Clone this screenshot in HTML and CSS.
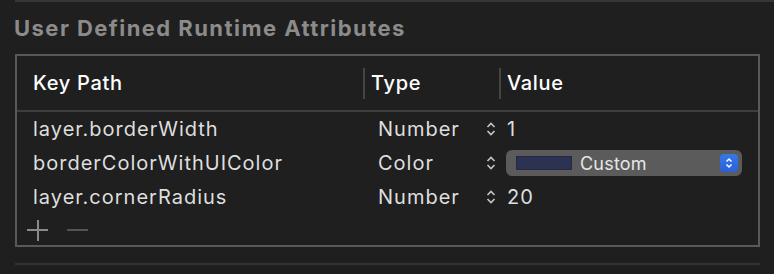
FILE: index.html
```html
<!DOCTYPE html>
<html lang="en">
  <head>
    <meta charset="UTF-8" />
    <title>User Defined Runtime Attributes</title>
    <link rel="stylesheet" href="styles.css">
  </head>
  <body>
    <div class="top-rule"></div>

    <h2 class="section-title">User Defined Runtime Attributes</h2>

    <div class="attr-box">
      <div class="attr-head">
        <div class="col-key">Key Path</div>
        <div class="col-type">Type</div>
        <div class="col-value">Value</div>
      </div>

      <div class="attr-row">
        <div class="cell-key">layer.borderWidth</div>
        <div class="cell-type">
          <span>Number</span>
          <svg class="stepper" width="10" height="14" viewBox="0 0 10 14"><path d="M1.5 5 L5 1.5 L8.5 5 M1.5 9 L5 12.5 L8.5 9" /></svg>
        </div>
        <div class="cell-value">1</div>
      </div>

      <div class="attr-row">
        <div class="cell-key">borderColorWithUIColor</div>
        <div class="cell-type">
          <span>Color</span>
          <svg class="stepper" width="10" height="14" viewBox="0 0 10 14"><path d="M1.5 5 L5 1.5 L8.5 5 M1.5 9 L5 12.5 L8.5 9" /></svg>
        </div>
        <div class="cell-value">
          <div class="popup">
            <span class="swatch"></span>
            <span class="popup-label">Custom</span>
            <span class="popup-btn">
              <svg width="10" height="14" viewBox="0 0 10 14"><path d="M2.5 5.5 L5 3 L7.5 5.5 M2.5 8.5 L5 11 L7.5 8.5" /></svg>
            </span>
          </div>
        </div>
      </div>

      <div class="attr-row">
        <div class="cell-key">layer.cornerRadius</div>
        <div class="cell-type">
          <span>Number</span>
          <svg class="stepper" width="10" height="14" viewBox="0 0 10 14"><path d="M1.5 5 L5 1.5 L8.5 5 M1.5 9 L5 12.5 L8.5 9" /></svg>
        </div>
        <div class="cell-value">20</div>
      </div>

      <div class="attr-foot">
        <span class="plus"></span>
        <span class="minus"></span>
      </div>
    </div>

    <div class="bottom-rule"></div>
  </body>
</html>
```

FILE: styles.css
```css
*{
    padding: 0px;
    margin: 0px;
    box-sizing: border-box;
}
body{
    background-color: #1f1f1f;
    font-family: Inter, "Liberation Sans", sans-serif;
    color: #dedede;
    width: 774px;
    height: 274px;
    overflow: hidden;
}
.top-rule{
    margin-left: 15px;
    height: 2px;
    background-color: #363636;
}
.section-title{
    margin: 13px 0 0 14px;
    height: 39px;
    font-size: 22px;
    font-weight: 700;
    letter-spacing: 1.45px;
    color: #8b8b8b;
    line-height: 26px;
}
.attr-box{
    margin-left: 15px;
    width: 745px;
    height: 193px;
    border: 2px solid #595959;
}
.attr-head{
    display: grid;
    grid-template-columns: 346px 136px 1fr;
    height: 56px;
    align-items: center;
    border-bottom: 2px solid #3e3e3e;
    font-size: 20px;
    font-weight: 500;
    letter-spacing: 0.7px;
    color: #ffffff;
}
.col-key{
    padding-left: 16px;
}
.col-type,
.col-value{
    border-left: 2px solid #454545;
    padding-left: 6px;
    height: 31px;
    line-height: 31px;
}
.attr-row{
    display: grid;
    grid-template-columns: 346px 136px 1fr;
    height: 34px;
    align-items: center;
    font-size: 20px;
    letter-spacing: 1px;
}
.cell-key{
    padding-left: 16px;
}
.cell-type{
    display: flex;
    align-items: center;
    justify-content: space-between;
    padding-left: 15px;
    padding-right: 3px;
}
.stepper path{
    fill: none;
    stroke: #c6c6c6;
    stroke-width: 1.6;
}
.cell-value{
    padding-left: 8px;
}
.popup{
    display: flex;
    align-items: center;
    width: 236px;
    height: 26px;
    margin-left: -1px;
    background-color: #5b5b5b;
    border-radius: 6px;
    padding: 0 4px 0 10px;
    letter-spacing: 0.2px;
}
.swatch{
    width: 56px;
    height: 14px;
    background-color: #2c3352;
    border: 1px solid #262b44;
}
.popup-label{
    margin-left: 8px;
    flex: 1;
    font-size: 18px;
    color: #e6e6e6;
}
.popup-btn{
    width: 18px;
    height: 18px;
    border-radius: 4px;
    background: linear-gradient(#3677ea, #2a62d6);
    display: flex;
    align-items: center;
    justify-content: center;
}
.popup-btn path{
    fill: none;
    stroke: #ffffff;
    stroke-width: 1.5;
}
.attr-foot{
    display: flex;
    align-items: center;
    gap: 19px;
    height: 31px;
    padding-left: 10px;
    padding-top: 1px;
}
.plus{
    position: relative;
    width: 21px;
    height: 21px;
}
.plus::before,
.plus::after{
    content: "";
    position: absolute;
    background-color: #8a8a8a;
}
.plus::before{
    left: 0;
    top: 9px;
    width: 21px;
    height: 2px;
}
.plus::after{
    left: 9.5px;
    top: 0;
    width: 2px;
    height: 21px;
}
.minus{
    width: 21px;
    height: 2px;
    background-color: #545454;
}
.bottom-rule{
    margin: 16px 14px 0 15px;
    height: 2px;
    background-color: #333333;
}
```
